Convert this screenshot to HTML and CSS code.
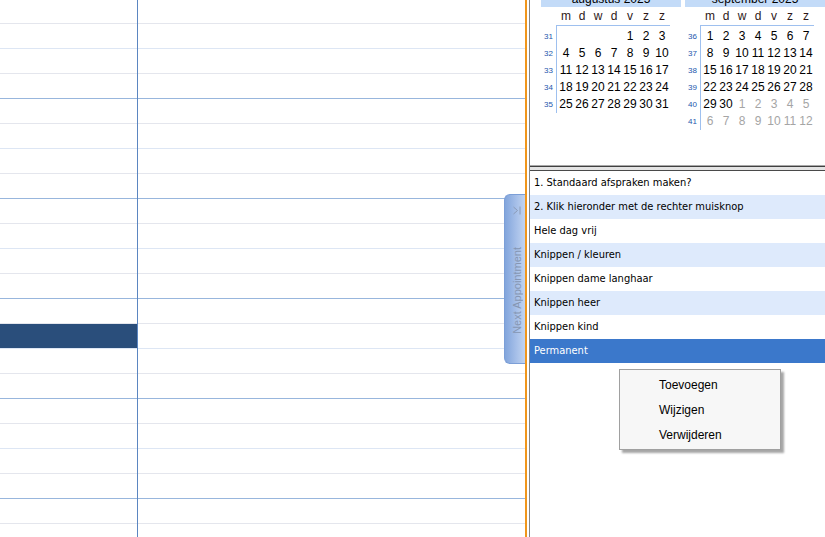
FILE: index.html
```html
<!DOCTYPE html>
<html lang="nl">
<head>
<meta charset="UTF-8">
<title>Agenda</title>
<link rel="stylesheet" href="styles.css">
</head>
<body>
<div class="app">
  <div class="day-view">
    <div class="col col-label">
      <div class="slot"></div><div class="slot half"></div><div class="slot"></div><div class="slot hour"></div>
      <div class="slot"></div><div class="slot half"></div><div class="slot"></div><div class="slot hour"></div>
      <div class="slot"></div><div class="slot half"></div><div class="slot"></div><div class="slot hour"></div>
      <div class="slot"></div><div class="slot half busy"></div><div class="slot"></div><div class="slot hour"></div>
      <div class="slot"></div><div class="slot half"></div><div class="slot"></div><div class="slot hour"></div>
      <div class="slot"></div><div class="slot half"></div>
    </div>
    <div class="col col-main">
      <div class="slot"></div><div class="slot half"></div><div class="slot"></div><div class="slot hour"></div>
      <div class="slot"></div><div class="slot half"></div><div class="slot"></div><div class="slot hour"></div>
      <div class="slot"></div><div class="slot half"></div><div class="slot"></div><div class="slot hour"></div>
      <div class="slot"></div><div class="slot half"></div><div class="slot"></div><div class="slot hour"></div>
      <div class="slot"></div><div class="slot half"></div><div class="slot"></div><div class="slot hour"></div>
      <div class="slot"></div><div class="slot half"></div>
    </div>
    <!-- collapsed navigation tab -->
    <div class="next-tab">
      <svg width="8" height="9" viewBox="0 0 8 9">
        <polyline points="0.5,1 4.5,4.5 0.5,8" fill="none" stroke="#8a9ab6" stroke-width="1"/>
        <line x1="7" y1="0.5" x2="7" y2="8.5" stroke="#8a9ab6" stroke-width="1"/>
      </svg>
      <span class="next-label">Next Appointment</span>
    </div>
  </div>
  <div class="splitter"></div>
  <div class="side">
    <div class="calendar">
      <div class="month">
        <div class="month-title">augustus 2025</div>
        <div class="day-names"><span>m</span><span>d</span><span>w</span><span>d</span><span>v</span><span>z</span><span>z</span></div>
        <div class="month-body">
          <div class="weeks"><span>31</span><span>32</span><span>33</span><span>34</span><span>35</span></div>
          <div class="dates">
            <span></span><span></span><span></span><span></span><span>1</span><span>2</span><span>3</span>
            <span>4</span><span>5</span><span>6</span><span>7</span><span>8</span><span>9</span><span>10</span>
            <span>11</span><span>12</span><span>13</span><span>14</span><span>15</span><span>16</span><span>17</span>
            <span>18</span><span>19</span><span>20</span><span>21</span><span>22</span><span>23</span><span>24</span>
            <span>25</span><span>26</span><span>27</span><span>28</span><span>29</span><span>30</span><span>31</span>
          </div>
        </div>
      </div>
      <div class="month">
        <div class="month-title">september 2025</div>
        <div class="day-names"><span>m</span><span>d</span><span>w</span><span>d</span><span>v</span><span>z</span><span>z</span></div>
        <div class="month-body">
          <div class="weeks"><span>36</span><span>37</span><span>38</span><span>39</span><span>40</span><span>41</span></div>
          <div class="dates">
            <span>1</span><span>2</span><span>3</span><span>4</span><span>5</span><span>6</span><span>7</span>
            <span>8</span><span>9</span><span>10</span><span>11</span><span>12</span><span>13</span><span>14</span>
            <span>15</span><span>16</span><span>17</span><span>18</span><span>19</span><span>20</span><span>21</span>
            <span>22</span><span>23</span><span>24</span><span>25</span><span>26</span><span>27</span><span>28</span>
            <span>29</span><span>30</span><span class="other">1</span><span class="other">2</span><span class="other">3</span><span class="other">4</span><span class="other">5</span>
            <span class="other">6</span><span class="other">7</span><span class="other">8</span><span class="other">9</span><span class="other">10</span><span class="other">11</span><span class="other">12</span>
          </div>
        </div>
      </div>
    </div>
    <div class="pane-gap"></div>
    <ul class="templates">
      <li>1. Standaard afspraken maken?</li>
      <li>2. Klik hieronder met de rechter muisknop</li>
      <li>Hele dag vrij</li>
      <li>Knippen / kleuren</li>
      <li>Knippen dame langhaar</li>
      <li>Knippen heer</li>
      <li>Knippen kind</li>
      <li class="selected">Permanent</li>
    </ul>
  </div>
  <div class="context-menu">
    <div class="menu-item">Toevoegen</div>
    <div class="menu-item">Wijzigen</div>
    <div class="menu-item">Verwijderen</div>
  </div>
</div>
</body>
</html>
```

FILE: styles.css
```css
body {
  margin: 0;
  font-family: "Liberation Sans", Arial, sans-serif;
  font-size: 12px;
  color: #000;
  background-color: white;
}
.app {
  position: relative;
  display: flex;
  width: 825px;
  height: 537px;
  overflow: hidden;
}

/* day view on the left */
.day-view {
  position: relative;
  display: flex;
  width: 526px;
  height: 537px;
  overflow: hidden;
}
.col {
  margin-top: -1px;
}
.col-label {
  width: 138px;
  box-sizing: border-box;
  border-right: 1px solid #5b86c1;
}
.col-main {
  flex: 1;
}
.slot {
  height: 25px;
  box-sizing: border-box;
  border-bottom: 1px solid #e4e6ed;
}
.slot.half {
  border-bottom-color: #dde6f4;
}
.slot.hour {
  border-bottom-color: #98b6dd;
}
.slot.busy {
  background-color: #2a4e7b;
}
.next-tab {
  position: absolute;
  left: 504px;
  top: 194px;
  width: 22px;
  height: 170px;
  box-sizing: border-box;
  border: 1px solid #7c9fd7;
  border-right: none;
  border-radius: 6px 0 0 6px;
  background: linear-gradient(to right, #82a5dc, #a7c0e9 55%, #c4d6f1);
  display: flex;
  flex-direction: column;
  align-items: center;
  padding-top: 11px;
  padding-left: 2px;
}
.next-label {
  margin-top: 32px;
  writing-mode: vertical-rl;
  transform: rotate(180deg);
  font-size: 11px;
  color: #8596b3;
}

.splitter {
  width: 2px;
  margin-right: 2px;
  background-color: #f0961c;
}

/* right side: date navigator + templates */
.side {
  flex: 1;
  border-left: 1px solid #858585;
  display: flex;
  flex-direction: column;
}
.calendar {
  height: 166px;
  box-sizing: border-box;
  border-bottom: 1px solid #a8a8a8;
  display: flex;
  gap: 4px;
  padding-left: 11px;
  overflow: hidden;
}
.month {
  width: 140px;
  flex-shrink: 0;
}
.month-title {
  margin-top: -9px;
  height: 16px;
  line-height: 16px;
  text-align: center;
  background-color: #c3dbf8;
}
.day-names {
  display: grid;
  grid-template-columns: repeat(7, 16px);
  width: 112px;
  height: 18px;
  margin-left: 15px;
  padding-left: 2px;
  border-bottom: 1px solid #9ec0ef;
  line-height: 18px;
  text-align: center;
  color: #2e1818;
}
.month-body {
  display: flex;
}
.weeks {
  width: 15px;
  padding-top: 2px;
  display: flex;
  flex-direction: column;
}
.weeks span {
  height: 17px;
  line-height: 17px;
  font-size: 8px;
  text-align: center;
  color: #1d56ad;
}
.dates {
  display: grid;
  grid-template-columns: repeat(7, 16px);
  grid-auto-rows: 17px;
  padding-left: 1px;
  padding-top: 2px;
  border-left: 1px solid #9ec0ef;
  line-height: 17px;
  text-align: center;
}
.dates .other {
  color: #a5a5a5;
}
.pane-gap {
  height: 5px;
  box-sizing: border-box;
  border-top: 1px solid #404040;
  border-bottom: 1px solid #4a4a4a;
  background-color: #e4e4e4;
}
.templates {
  list-style: none;
  margin: 0;
  padding: 0;
  font-family: "DejaVu Sans Condensed", "Liberation Sans", Arial, sans-serif;
  font-size: 11px;
}
.templates li {
  height: 24px;
  line-height: 24px;
  padding-left: 4px;
  white-space: nowrap;
  overflow: hidden;
}
.templates li:nth-child(even) {
  background-color: #deeafc;
}
.templates li.selected {
  background-color: #3b78cb;
  color: white;
}

/* right-click menu */
.context-menu {
  position: absolute;
  left: 619px;
  top: 369px;
  width: 162px;
  height: 81px;
  box-sizing: border-box;
  padding-top: 3px;
  border: 1px solid #a0a0a0;
  background-color: #f7f7f7;
  box-shadow: 3px 3px 2px rgba(0, 0, 0, 0.35);
}
.menu-item {
  height: 25px;
  line-height: 25px;
  padding-left: 39px;
}
```
